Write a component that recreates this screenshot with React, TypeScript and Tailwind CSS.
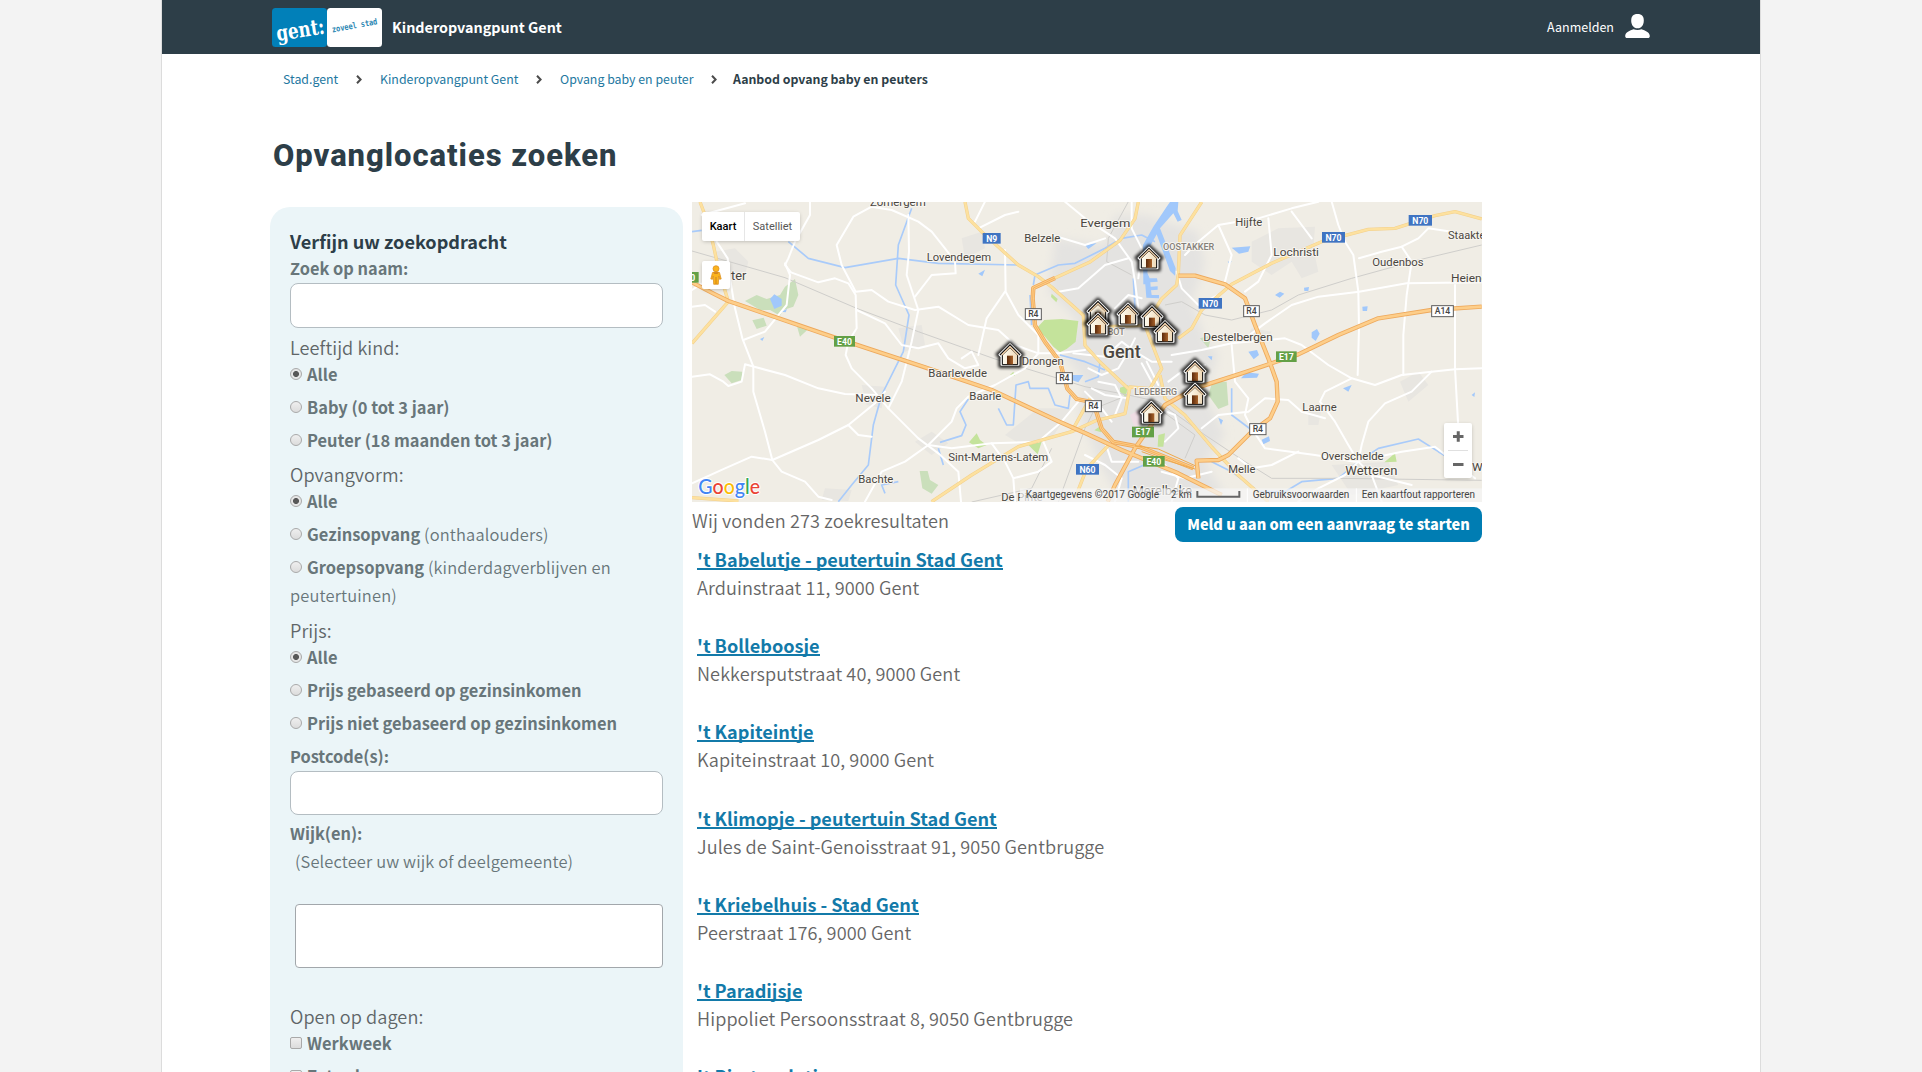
import type { ReactNode } from "react";

/* ---------- Map data (drawing units: 3 per pixel) ---------- */

const minorRoads = [
  "M95 140 L128 190 L135 250 L150 340 L172 430 L205 515 L205 590 L240 710 L262 795 L290 830 L360 860 L400 905 L440 915",
  "M21 545 L75 538 L115 560 L130 573 L170 560 L180 508 L300 540 L400 580 L480 597 L575 600",
  "M21 865 L120 820 L200 785 L262 795 L400 735 L490 690 L570 625 L600 590",
  "M490 690 L520 720 L560 725",
  "M300 205 L315 240 L305 330 L240 410 L175 435",
  "M375 21 L375 60 L330 140 L310 190 L300 210 L318 232 L400 262 L450 250 L490 265 L512 300 L515 400 L490 440 L482 480 L500 520 L560 580 L610 640 L700 730 L760 775 L820 830 L828 920",
  "M560 35 L505 65 L455 150 L470 210 L512 290 L560 285 L610 320 L690 345 L760 335 L850 390 L940 405 L990 450 L1060 475",
  "M560 35 L620 45 L700 80 L740 110 L780 160 L810 200 L812 235 L740 240 L690 305",
  "M670 60 L672 170 L665 240 L700 345 L680 440 L650 560 L610 640",
  "M515 345 L600 385 L650 450 L700 460 L760 445 L790 490 L840 520 L880 510 L860 470 L830 490",
  "M960 165 L962 290 L1000 360 L1060 420 L1060 475 L1020 520 L930 570 L850 605 L815 640 L800 680 L730 750 L660 800 L590 830 L540 920",
  "M960 290 L905 370 L880 480",
  "M1060 475 L1120 475 L1200 465",
  "M870 80 L900 20 M880 100 L960 60 L1000 50",
  "M21 335 L60 330 L90 350 M21 285 L60 260 M50 60 L180 25",
  "M1140 20 L1200 70 L1290 130 L1340 200 L1350 260 L1360 340",
  "M1120 290 L1180 280 L1260 210 L1330 190 M1100 120 L1200 150 L1260 130",
  "M1165 475 L1260 485 L1310 440 L1350 470 L1400 500 L1460 500",
  "M730 750 L800 760 L920 745 L1060 740 L1130 680 L1180 620",
  "M920 745 L960 800 L985 850 L990 920 M1075 740 L1100 800 L1060 830 L985 850",
  "M1360 250 L1370 160 L1340 100 L1340 20 M1290 340 L1330 300 L1370 310",
  "M1210 520 L1250 540 L1300 520 L1330 470 L1350 430 M1220 580 L1260 600 L1330 610",
  "M1475 230 L1490 280 L1540 330 L1600 300",
  "M1600 90 L1640 180 L1620 260 M1500 180 L1540 140 L1600 90 L1720 70 L1820 40 L1900 20",
  "M1750 70 L1760 180 L1720 260 L1680 290 M1820 50 L1850 90 L1880 130",
  "M1940 20 L1960 90 L1980 140 L2005 180 L2020 290 L2022 400 L2018 540",
  "M2022 190 L2090 170 L2150 155 L2180 200 L2165 300 L2155 420 L2155 540",
  "M1680 430 L1740 385 L1820 330 L1900 305 L2022 290 L2165 265 L2390 262",
  "M2150 155 L2200 130 L2230 100 L2300 110 M2310 270 L2310 520 L2320 700",
  "M1460 480 L1550 465 L1640 445 L1800 430 L1850 450 L1930 510 L2000 550 L2070 570 L2150 540 L2240 530 L2310 523 L2390 520",
  "M2240 530 L2180 590 L2100 625 L2050 680 L2030 750 L2020 800",
  "M2000 550 L1920 590 L1905 620 L1950 680 L1990 750 L2020 800 L1980 840 L1900 880 L1840 920",
  "M1640 450 L1650 560 L1690 610 L1680 660 L1700 700 L1740 760 L1890 780 L2010 800 L2150 770 L2250 755 L2370 850",
  "M1550 700 L1600 660 L1690 650 L1740 610 L1810 615 L1850 650 L1920 670",
  "M1660 790 L1700 820 L1760 810 L1840 770 M2060 840 L2090 920 M2020 800 L2060 840 L2180 870",
  "M1450 560 L1490 530 L1560 510 M1440 740 L1480 700 L1470 660 L1420 640 M1200 590 L1250 640 L1280 680",
  "M1200 780 L1260 810 L1310 850 L1290 920 M1420 790 L1480 850 L1460 920 M1430 830 L1500 850 L1580 830",
  "M1260 740 L1280 800 L1360 800 M1240 560 L1290 570 L1310 610 L1290 660",
  "M1370 505 L1400 560 L1410 600 M1385 500 L1420 570",
];

const yellowRoads = [
  "M45 21 L60 60 L85 150 L100 220 L130 320 L21 445",
  "M840 21 L850 70 L895 115 L1000 210 L1060 245 L1100 276 L1195 361 L1200 451 L1245 501 L1335 586",
  "M1360 21 L1350 71 L1305 136 L1215 201 L1110 249",
  "M740 920 L860 840 L1000 755 L1160 710 L1235 676 L1320 656 L1335 576 L1395 581 L1430 521 L1380 391 L1430 311 L1475 270 L1480 236 L1485 121 L1550 21",
  "M1170 910 L1205 821 L1270 751 M1215 610 L1160 710",
  "M1425 540 L1440 611 L1500 661 L1580 756 L1660 841 L1750 920",
  "M1480 430 L1520 400 L1550 345 L1640 268 L1760 205 L1910 140 L2050 103 L2130 100 L2250 62 L2310 50 L2390 72",
  "M1195 380 L1260 395 L1380 391",
  "M21 908 L160 918",
];

const highways = [
  "M21 262 L90 298 L130 318 L450 428 L720 517 L920 585 L1125 681 L1200 714 L1310 765 L1480 835 L1610 900",
  "M2390 335 L2240 345 L2080 370 L1960 420 L1840 478 L1670 535 L1530 580 L1440 630 L1350 760 L1290 870 L1268 920",
  "M1480 242 L1530 242 L1620 268 L1680 310 L1710 390 L1750 490 L1775 560 L1778 620 L1755 670 L1700 710 L1630 780 L1600 795 L1535 797 L1540 850",
  "M1110 249 L1045 279 L1043 311 L1050 391 L1080 441 L1125 501 L1147 581 L1175 612 L1225 622 L1250 701 L1285 741 L1365 756 L1525 820",
];

const water = [
  "M310 140 L370 190 L480 218 L640 190 L760 205 L1000 210",
  "M21 110 L50 106",
  "M680 40 L640 150 L632 270 L672 360 L655 470 L590 600 L565 690 L550 810 L500 870 L460 920",
  "M765 742 L830 722 L843 690 L825 650 L850 612 M940 640 L965 690 L985 690 L993 570 L1030 560 L1035 580 L1090 580 L1110 630 L1150 640 L1155 600",
  "M1125 480 L1200 500 L1260 525 M1050 240 L1120 210 L1170 205 L1260 160 L1310 130 L1370 120 L1410 140",
  "M1350 340 L1345 250 M1580 800 L1640 830 L1720 890 L1800 890 L1850 860 L1960 850 L2020 800 L2080 760 L2200 732 L2260 770 L2310 800",
  "M1200 560 L1240 545 L1245 500 M1050 240 L1045 270 M1035 300 L1040 390",
  "M1640 580 L1640 660 L1720 720 M1330 920 L1330 830 L1400 800 M640 860 L590 870 L600 895 M760 760 L775 810",
];

const lakes = [
  "M255 312 L268 298 L290 312 L290 332 L268 342 Z",
  "M288 350 L306 342 L302 352 Z M225 432 L238 426 L232 438 Z",
  "M880 236 L900 224 L892 244 Z",
  "M1640 158 L1696 154 L1690 170 L1662 176 Z M1628 200 L1640 198 L1634 208 Z",
  "M1770 300 L1785 290 L1798 296 L1784 308 Z M1857 278 L1872 276 L1870 288 L1858 288 Z",
  "M2032 335 L2048 334 L2046 348 L2033 348 Z M1880 412 L1896 402 L1904 416 L1892 438 L1880 428 Z",
  "M1690 470 L1716 465 L1722 480 L1706 493 Z M1568 484 L1582 484 L1580 496 Z",
  "M1668 550 L1684 532 L1722 536 L1716 548 Z",
  "M1600 668 L1614 676 L1608 690 Z M1730 734 L1752 724 L1755 738 L1735 748 Z",
  "M1974 580 L2000 570 L1990 590 Z M2360 600 L2370 592 L2368 606 Z",
  "M1455 21 L1480 21 L1478 48 L1490 75 L1478 80 L1465 55 L1425 100 L1472 220 L1470 242 L1455 228 L1415 118 L1392 160 L1385 268 L1375 268 L1374 150 L1405 95 L1445 35 Z",
  "M1378 230 L1388 236 L1394 250 L1416 250 L1418 260 L1396 262 L1397 275 L1418 274 L1418 284 L1398 286 L1400 300 L1422 300 L1422 310 L1384 308 Z",
  "M1148 540 L1195 540 L1180 562 L1150 552 Z M1200 150 L1235 144 L1210 162 Z",
];

const parks = [
  "M180 318 L215 300 L245 312 L285 300 L300 275 L330 252 L340 300 L325 335 L295 345 L285 362 L255 345 L225 345 Z",
  "M202 376 L236 368 L245 392 L215 402 Z M332 380 L370 402 L345 425 Z",
  "M118 540 L140 528 L172 530 L170 555 L140 565 Z",
  "M704 828 L728 828 L735 855 L760 870 L740 896 L712 880 Z",
  "M1582 560 L1625 560 L1630 630 L1600 642 L1570 600 Z",
  "M1545 430 L1580 420 L1570 460 Z",
];
const woods = [
  "M1055 400 L1078 375 L1130 372 L1180 378 L1172 440 L1145 462 L1125 472 L1105 455 L1080 425 Z",
  "M1100 296 L1118 312 L1114 322 L1098 306 Z",
  "M852 742 L875 715 L885 735 L905 750 L880 760 Z M1030 750 L1070 740 L1058 778 Z",
  "M975 540 L985 530 L990 542 Z M1305 578 L1330 570 L1322 606 L1305 590 Z",
  "M2098 802 L2130 775 L2135 800 Z M1420 720 L1440 715 L1435 755 L1418 755 Z",
  "M1228 706 L1250 690 L1248 712 Z",
];

const urban = [
  "M1110 130 L1260 150 L1290 60 L1380 60 L1540 110 L1560 210 L1520 320 L1560 430 L1600 480 L1560 600 L1620 720 L1560 800 L1620 900 L1420 921 L1300 900 L1250 820 L1180 650 L1200 560 L1130 470 L1180 380 L1090 290 Z",
];
const hamlets = [
  "M1700 140 L1780 100 L1890 95 L1885 160 L1900 230 L1850 250 L1820 200 L1760 240 L1700 200 Z",
  "M90 170 L150 160 L190 200 L180 240 L110 250 Z",
  "M830 130 L890 110 L900 160 L840 190 Z",
  "M640 400 L710 390 L720 450 L660 470 Z",
  "M690 740 L740 710 L790 745 L740 780 Z",
  "M960 720 L1060 640 L1160 640 L1100 730 L1010 750 Z",
  "M2145 560 L2200 530 L2230 570 L2170 620 Z",
  "M1940 810 L2110 800 L2140 870 L2000 900 Z",
  "M1740 440 L1690 420 L1700 400 L1760 410 Z M1870 640 L1910 640 L1900 690 L1870 690 Z",
  "M530 570 L600 575 L590 640 L545 630 Z M420 880 L500 885 L490 918 L410 915 Z",
];

type Label = [text: string, x: number, y: number, width: number, size: number];
const towns: Label[] = [
  ["Zomergem", 555, 33, 167, 34],
  ["Belzele", 1018, 141, 108, 34],
  ["Evergem", 1186, 97, 150, 35],
  ["Lovendegem", 725, 198, 193, 34],
  ["ter", 138, 255, 46, 36],
  ["Hijfte", 1651, 92, 81, 34],
  ["Lochristi", 1765, 183, 137, 34],
  ["Staakte", 2289, 132, 112, 34],
  ["Oudenbos", 2062, 213, 154, 34],
  ["Heiend", 2298, 261, 112, 34],
  ["Drongen", 1010, 510, 126, 34],
  ["Baarlevelde", 730, 546, 176, 34],
  ["Baarle", 853, 615, 96, 34],
  ["Nevele", 511, 621, 106, 34],
  ["Sint-Martens-Latem", 790, 798, 300, 34],
  ["Bachte", 520, 864, 105, 34],
  ["De Pinte", 949, 918, 124, 34],
  ["Destelbergen", 1555, 438, 208, 34],
  ["Laarne", 1852, 648, 103, 34],
  ["Overschelde", 1908, 795, 188, 34],
  ["Wetteren", 1981, 840, 156, 36],
  ["Melle", 1630, 834, 81, 34],
  ["Merelbeke", 1343, 900, 178, 36],
  ["W", 2361, 828, 32, 34],
];
const districts: Label[] = [
  ["OOSTAKKER", 1434, 165, 154, 25],
  ["BOT", 1268, 419, 51, 25],
  ["LEDEBERG", 1348, 599, 128, 25],
];

type Shield = [text: string, x: number, y: number, w: number, kind: "blue" | "green" | "white"];
const shields: Shield[] = [
  ["N9", 893, 114, 54, "blue"],
  ["N70", 1911, 111, 69, "blue"],
  ["N70", 2171, 60, 70, "blue"],
  ["N70", 1541, 309, 70, "blue"],
  ["N60", 1173, 807, 69, "blue"],
  ["E40", 447, 423, 63, "green"],
  ["0", 5, 231, 36, "green"],
  ["E17", 1773, 469, 62, "green"],
  ["E17", 1341, 695, 66, "green"],
  ["E40", 1374, 783, 65, "green"],
  ["R4", 1020, 340, 50, "white"],
  ["R4", 1113, 532, 50, "white"],
  ["R4", 1200, 616, 50, "white"],
  ["R4", 1675, 331, 49, "white"],
  ["R4", 1693, 685, 51, "white"],
  ["A14", 2239, 331, 67, "white"],
];
const shieldFill = { blue: "#3f74c2", green: "#63a046", white: "#ffffff" };

const markers = [
  [975, 480], [1392, 190], [1239, 350], [1239, 388], [1329, 358],
  [1401, 366], [1440, 411], [1530, 530], [1530, 599], [1399, 653],
];

function House({ x, y }: { x: number; y: number }) {
  return (
    <g transform={`translate(${x} ${y})`}>
      <path d="M0 -37 L38 -2 L30 6 L30 34 L-30 34 L-30 6 L-38 -2 Z" fill="#000" stroke="#000" strokeWidth="11" strokeLinejoin="round" opacity="0.8" filter="url(#glow)" />
      <path d="M0 -33 L32 -1 L26 5 L26 30 L-26 30 L-26 5 L-32 -1 Z" fill="#fff" stroke="#fff" strokeWidth="5" strokeLinejoin="round" />
      <path d="M-23 29 L-23 0 L0 -22 L23 0 L23 29 Z" fill="url(#wall)" stroke="#000" strokeWidth="3" />
      <path d="M-30 0 L0 -30 L30 0" fill="none" stroke="#111" strokeWidth="4" />
      <path d="M-25 0 L0 -25 L25 0" fill="none" stroke="#ecc9a0" strokeWidth="4" />
      <rect x="-9" y="2" width="18" height="26" fill="url(#door)" />
    </g>
  );
}

function MapDrawing() {
  return (
    <svg viewBox="21 21 2370 900" className="block h-[300px] w-[790px]" fontFamily="Roboto, sans-serif">
      <defs>
        <filter id="glow" x="-50%" y="-50%" width="200%" height="200%">
          <feGaussianBlur stdDeviation="4" />
        </filter>
        <filter id="soft" x="-10%" y="-10%" width="120%" height="120%">
          <feGaussianBlur stdDeviation="14" />
        </filter>
        <linearGradient id="wall">
          <stop offset="0" stopColor="#fffdf2" />
          <stop offset="1" stopColor="#efd9b8" />
        </linearGradient>
        <linearGradient id="door">
          <stop offset="0" stopColor="#5b2a0c" />
          <stop offset="1" stopColor="#a8622a" />
        </linearGradient>
      </defs>
      <rect x="21" y="21" width="2370" height="900" fill="#f0ede5" />
      <g fill="#e4e3e1" filter="url(#soft)">
        {urban.map((d) => <path key={d} d={d} />)}
      </g>
      <g fill="#e8e6e1">{hamlets.map((d) => <path key={d} d={d} />)}</g>
      <g fill="#cadfbb">{parks.map((d) => <path key={d} d={d} />)}</g>
      <g fill="#c4e39b">{woods.map((d) => <path key={d} d={d} />)}</g>
      <path d="M1335 660 L1370 640 L1385 670 L1350 700 Z" fill="#efdde4" />
      <g fill="none" stroke="#a9cbfa" strokeWidth="5" strokeLinejoin="round">
        {water.map((d) => <path key={d} d={d} />)}
      </g>
      <g fill="#a1c8fb">{lakes.map((d) => <path key={d} d={d} />)}</g>
      <g fill="none" stroke="#cfcecb" strokeWidth="3">
        <path d="M21 168 L300 248 L515 340 L700 410 L930 492 L1200 575 L1330 600 L1420 620 L1560 720 L1680 800 L1760 850 L1960 850 L2390 856" />
        <path d="M2390 150 L2200 195 L2000 250 L1840 300 L1760 345 L1640 375 L1560 360 L1490 320 L1440 330 M1330 20 L1270 130 L1265 200 L1340 240" />
        <path d="M1120 921 L1200 700 L1230 640 L1330 600 M860 921 L1040 880 L1100 760 M1420 640 L1530 720 L1500 790" />
      </g>
      <g fill="none" stroke="#ffffff" strokeWidth="6" strokeLinejoin="round" strokeLinecap="round">
        {minorRoads.map((d) => <path key={d} d={d} />)}
      </g>
      <g fill="none" strokeLinejoin="round">
        <g stroke="#f3d08c" strokeWidth="10">{yellowRoads.map((d) => <path key={d} d={d} />)}</g>
        <g stroke="#fde19f" strokeWidth="7">{yellowRoads.map((d) => <path key={d} d={d} />)}</g>
        <g stroke="#eea95c" strokeWidth="13">{highways.map((d) => <path key={d} d={d} />)}</g>
        <g stroke="#fdce8a" strokeWidth="8">{highways.map((d) => <path key={d} d={d} />)}</g>
        <path d={highways[3]} stroke="#f2a54a" strokeWidth="2" />
        <path d="M1350 752 L1420 762 L1530 812 M1370 770 L1440 795 L1530 822" stroke="#efa94c" strokeWidth="3" />
      </g>
      <g>
        {shields.map(([text, x, y, w, kind]) => (
          <g key={`${text}-${x}`}>
            <rect
              x={kind === "white" ? x + 1 : x}
              y={kind === "white" ? y + 1 : y}
              width={kind === "white" ? w - 2 : w}
              height={kind === "white" ? 33 : 32}
              fill={shieldFill[kind]}
              stroke={kind === "white" ? "#5c5c5c" : "none"}
              strokeWidth="3"
            />
            <text x={x + w / 2} y={y + 26} textAnchor="middle" fontSize="26" fontWeight={kind === "white" ? 500 : 700} fill={kind === "white" ? "#444" : "#fff"}>
              {text}
            </text>
          </g>
        ))}
      </g>
      <g fill="#4a4640" stroke="#f7f5f0" strokeWidth="6" strokeLinejoin="round" paintOrder="stroke">
        {towns.map(([text, x, y, width, size]) => (
          <text key={text} x={x} y={y} fontSize={size} textLength={width} lengthAdjust="spacingAndGlyphs">{text}</text>
        ))}
        <text x="1253" y="489" fontSize="53" fontWeight="500" textLength="114" lengthAdjust="spacingAndGlyphs">Gent</text>
        <g fill="#85807a">
          {districts.map(([text, x, y, width, size]) => (
            <text key={text} x={x} y={y} fontSize={size} fontWeight="500" textLength={width} lengthAdjust="spacingAndGlyphs">{text}</text>
          ))}
        </g>
      </g>
      {markers.map(([x, y]) => <House key={`${x}-${y}`} x={x} y={y} />)}
      <rect x="1005" y="880" width="1386" height="41" fill="#f5f5f5" opacity="0.72" />
      <path d="M1687 880 V921 M2014 880 V921" stroke="#fff" strokeWidth="3" />
      <g fill="#444" fontSize="30">
        <text x="1022" y="910" textLength="400" lengthAdjust="spacingAndGlyphs">Kaartgegevens ©2017 Google</text>
        <text x="1458" y="910" textLength="62" lengthAdjust="spacingAndGlyphs">2 km</text>
        <text x="1703" y="910" textLength="290" lengthAdjust="spacingAndGlyphs">Gebruiksvoorwaarden</text>
        <text x="2030" y="910" textLength="340" lengthAdjust="spacingAndGlyphs">Een kaartfout rapporteren</text>
      </g>
      <path d="M1537 888 V905 H1663 V888" fill="none" stroke="#666" strokeWidth="6" />
      <text x="40" y="898" fontSize="64" fontFamily="Lato, sans-serif" fontWeight="500" textLength="185" lengthAdjust="spacingAndGlyphs" stroke="#fff" strokeWidth="6" strokeLinejoin="round" paintOrder="stroke">
        <tspan fill="#4285f4">G</tspan>
        <tspan fill="#ea4335">o</tspan>
        <tspan fill="#fbbc05">o</tspan>
        <tspan fill="#4285f4">g</tspan>
        <tspan fill="#34a853">l</tspan>
        <tspan fill="#ea4335">e</tspan>
      </text>
    </svg>
  );
}

function MapPanel() {
  return (
    <div className="relative mt-[-5px] h-[300px] w-[790px] overflow-hidden">
      <MapDrawing />
      <div className="absolute top-[10px] left-[10px] flex h-[29px] w-[98px] rounded-xs bg-white font-['Roboto',sans-serif] text-[11px] leading-[29px] shadow-[0_1px_4px_-1px_rgba(0,0,0,0.3)]">
        <span className="w-[43px] border-r border-[#e6e6e6] text-center font-medium text-black">Kaart</span>
        <span className="flex-1 text-center text-[#565656]">Satelliet</span>
      </div>
      <div className="absolute top-[59px] left-[10px] flex size-7 items-center justify-center rounded-xs bg-white shadow-[0_1px_4px_-1px_rgba(0,0,0,0.3)]">
        <svg viewBox="0 0 12 20" className="h-5 w-3">
          <path d="M2.5 7.5 Q6 6 9.500 7.500 L11.200 14 L9.500 14.300 L8.800 11 L8.300 19.300 H3.700 L3.200 11 L2.500 14.300 L0.800 14 Z" fill="#fbb31c" stroke="#d88a1a" strokeWidth="0.7" />
          <path d="M6 12 V19" stroke="#c9801a" strokeWidth="0.9" />
          <path d="M3 7.200 H9 L7.500 9 H4.500 Z" fill="#d4851d" />
          <circle cx="6" cy="3.700" r="3" fill="#fbb31c" stroke="#d88a1a" strokeWidth="0.7" />
        </svg>
      </div>
      <div className="absolute top-[221px] left-[752px] flex h-[55px] w-7 flex-col items-center rounded-xs bg-white shadow-[0_1px_4px_-1px_rgba(0,0,0,0.3)]">
        <svg viewBox="0 0 28 55" className="h-[55px] w-7">
          <path d="M9 13.500 H19.500 M14.250 8.300 V18.700 M9 41.500 H19.500" stroke="#666" strokeWidth="3" />
          <path d="M4 27.500 H24" stroke="#e0e0e0" strokeWidth="1" />
        </svg>
      </div>
    </div>
  );
}

/* ---------- Header ---------- */

function Logo() {
  return (
    <svg viewBox="0 0 110 39" className="h-[39px] w-[110px]">
      <rect x="0" y="0" width="55" height="39" rx="3.500" fill="#0180b9" />
      <rect x="55" y="0" width="55" height="39" rx="3.500" fill="#fff" />
      <text transform="translate(5.500 33) rotate(-9)" fontFamily="DejaVu Serif, serif" fontWeight="700" fontSize="21.500" fill="#fff" textLength="48.500" lengthAdjust="spacingAndGlyphs">gent:</text>
      <text transform="translate(60.500 24.500) rotate(-10.500)" fontFamily="DejaVu Sans Mono, monospace" fontWeight="700" fontSize="8.500" fill="#2b87b3" textLength="46" lengthAdjust="spacingAndGlyphs">zoveel stad</text>
    </svg>
  );
}

function Header() {
  return (
    <header className="flex h-[54px] items-center bg-[#2d3e48] pr-[110px] pl-[110px] text-white">
      <Logo />
      <span className="ml-[10px] text-[14.33px] leading-5 font-bold">Kinderopvangpunt Gent</span>
      <span className="mr-[11px] ml-auto text-[12.5px] leading-5">Aanmelden</span>
      <svg viewBox="0 0 25 24" className="mb-[2px] h-6 w-[25px]">
        <path d="M12.500 0 C17 0 18.800 2.500 18.800 6.500 C18.800 11 16.500 14.300 12.500 14.300 C8.500 14.300 6.200 11 6.200 6.500 C6.200 2.500 8 0 12.500 0 Z" fill="#fff" />
        <path d="M0.200 22 C0.200 18.500 5 16.500 8.500 15.300 C11 16.300 14 16.300 16.500 15.300 C20 16.500 24.800 18.500 24.800 22 C24.800 23.500 24 24 23 24 H2 C1 24 0.200 23.500 0.200 22 Z" fill="#fff" />
      </svg>
    </header>
  );
}

function Chevron() {
  return (
    <svg viewBox="0 0 6 9" className="h-[9px] w-[6px]">
      <path d="M1 0.800 L4.600 4.500 L1 8.200" fill="none" stroke="#4c4c4c" strokeWidth="2" />
    </svg>
  );
}

function Breadcrumbs() {
  return (
    <nav className="flex h-[50px] items-center pl-[121px] text-[12.35px] leading-5 text-[#23789f]">
      <span className="w-[73px]">Stad.gent</span>
      <Chevron />
      <span className="ml-[18px] w-[156px]">Kinderopvangpunt Gent</span>
      <Chevron />
      <span className="ml-[18px] w-[151px]">Opvang baby en peuter</span>
      <Chevron />
      <span className="ml-[16px] -mt-px font-bold text-[#2d3e48]">Aanbod opvang baby en peuters</span>
    </nav>
  );
}

/* ---------- Filter panel ---------- */

function Group({ title, children }: { title: string; children: ReactNode }) {
  return (
    <div>
      <div className="h-7 text-[18.1px] leading-[30px] font-[350] tracking-[0.08px] text-[#5f6668]">{title}</div>
      {children}
    </div>
  );
}

function Radio({ checked }: { checked?: boolean }) {
  const fill = checked
    ? "bg-[radial-gradient(circle,#585858_2.6px,#e6e6e6_3.4px)]"
    : "bg-linear-to-b from-[#efefef] to-[#dcdcdc]";
  return <span className={`mr-[5px] inline-block size-3 rounded-full border border-[#a9a9a9] align-[1px] ${fill}`} />;
}

function Option({ label, note, checked }: { label: string; note?: string; checked?: boolean }) {
  return (
    <div className="mb-[5px] text-[16.44px] leading-7 text-[#68767a]">
      <Radio checked={checked} />
      <span className="font-bold">{label}</span>
      {note && <span className="tracking-[0.15px] font-[350]"> {note}</span>}
    </div>
  );
}

function Check({ label }: { label: string }) {
  return (
    <div className="mb-[5px] text-[16.44px] leading-7 font-bold text-[#68767a]">
      <span className="mr-[5px] inline-block size-3 rounded-xs border border-[#a9a9a9] bg-linear-to-b from-[#efefef] to-[#dcdcdc] align-[1px]" />
      {label}
    </div>
  );
}

function Filters() {
  return (
    <aside className="h-[1000px] w-[413px] shrink-0 rounded-t-[20px] bg-[#ebf5f8] px-5 pt-[19px]">
      <div className="h-7 text-[18.13px] leading-[30px] font-bold text-[#2d3e48]">Verfijn uw zoekopdracht</div>
      <div className="text-[16.35px] leading-7 font-bold text-[#68767a]">Zoek op naam:</div>
      <div className="mt-px mb-1 h-[45px] rounded-lg border border-[#b4bdc2] bg-white" />
      <Group title="Leeftijd kind:">
        <Option label="Alle" checked />
        <Option label="Baby (0 tot 3 jaar)" />
        <Option label="Peuter (18 maanden tot 3 jaar)" />
      </Group>
      <Group title="Opvangvorm:">
        <Option label="Alle" checked />
        <Option label="Gezinsopvang" note="(onthaalouders)" />
        <Option label="Groepsopvang" note="(kinderdagverblijven en peutertuinen)" />
      </Group>
      <div className="pt-px">
        <Group title="Prijs:">
          <Option label="Alle" checked />
          <Option label="Prijs gebaseerd op gezinsinkomen" />
          <Option label="Prijs niet gebaseerd op gezinsinkomen" />
        </Group>
      </div>
      <div className="text-[16.35px] leading-7 font-bold text-[#68767a]">Postcode(s):</div>
      <div className="mt-px mb-1 h-11 rounded-lg border border-[#b4bdc2] bg-white" />
      <div className="text-[16.35px] leading-7 font-bold text-[#68767a]">Wijk(en):</div>
      <div className="pl-[5px] text-[16.44px] leading-7 font-[350] tracking-[0.13px] text-[#68767a]">(Selecteer uw wijk of deelgemeente)</div>
      <div className="mt-[29px] mb-[33px] ml-[5px] h-16 rounded-[4px] border border-[#a2a7ab] bg-white" />
      <Group title="Open op dagen:">
        <Check label="Werkweek" />
        <Check label="Zaterdag" />
      </Group>
    </aside>
  );
}

/* ---------- Results ---------- */

const results = [
  ["'t Babelutje - peutertuin Stad Gent", "Arduinstraat 11, 9000 Gent"],
  ["'t Bolleboosje", "Nekkersputstraat 40, 9000 Gent"],
  ["'t Kapiteintje", "Kapiteinstraat 10, 9000 Gent"],
  ["'t Klimopje - peutertuin Stad Gent", "Jules de Saint-Genoisstraat 91, 9050 Gentbrugge"],
  ["'t Kriebelhuis - Stad Gent", "Peerstraat 176, 9000 Gent"],
  ["'t Paradijsje", "Hippoliet Persoonsstraat 8, 9050 Gentbrugge"],
  ["'t Piratenslotje", ""],
];

function Results() {
  return (
    <section className="ml-[9px] w-[790px]">
      <MapPanel />
      <div className="flex items-start justify-between">
        <p className="mt-1 text-[18.1px] leading-7 font-[350] tracking-[0.12px] text-[#666]">Wij vonden 273 zoekresultaten</p>
        <button className="mt-[5px] h-[35px] w-[307px] rounded-lg bg-[#007db3] pb-px text-[14.53px] leading-5 font-black whitespace-nowrap text-white">
          Meld u aan om een aanvraag te starten
        </button>
      </div>
      <ul className="mt-[2px] ml-[5px] text-[18.13px] leading-[30px]">
        {results.map(([name, address]) => (
          <li key={name} className="h-[86.2px]">
            <div className="flex h-7">
              <a className="h-[26px] border-b-2 border-[#137aa9] font-bold text-[#137aa9]">{name}</a>
            </div>
            <div className="h-7 font-[350] tracking-[0.1px] text-[#666]">{address}</div>
          </li>
        ))}
      </ul>
    </section>
  );
}

export default function App() {
  return (
    <div className="flex h-[1072px] justify-center overflow-hidden bg-[#f3f3f3] font-['Noto_Sans_CJK_SC','Noto_Sans',sans-serif]">
      <div className="w-[1600px] shrink-0 border-x border-[#dcdcdc] bg-white">
        <Header />
        <Breadcrumbs />
        <h1 className="mt-[31px] ml-[111px] h-[72px] font-['Roboto',sans-serif] text-[31px] leading-[42px] font-extrabold tracking-[0.95px] text-[#2d3e48]">
          Opvanglocaties zoeken
        </h1>
        <div className="flex items-start pl-[108px]">
          <Filters />
          <Results />
        </div>
      </div>
    </div>
  );
}
